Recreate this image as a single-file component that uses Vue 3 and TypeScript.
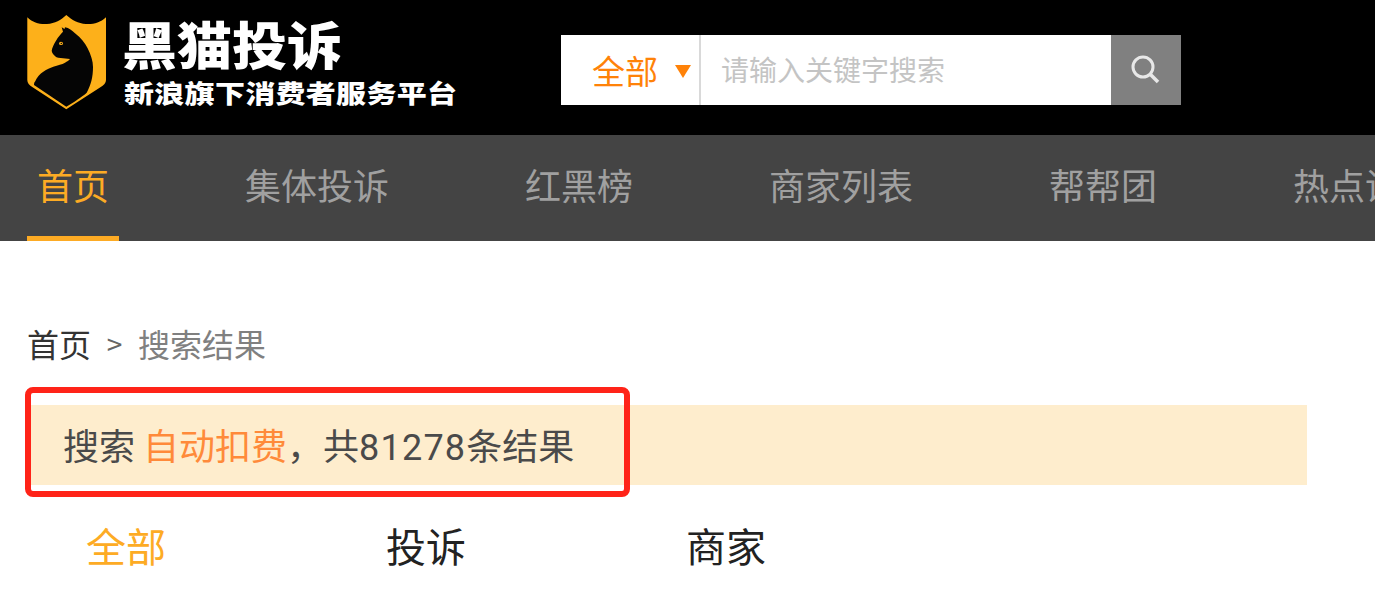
<template>
  <div class="page">
    <header class="top">
      <div class="logo">
        <svg class="shield" width="80" height="96" viewBox="0 0 80 96">
          <path d="M0.3 3.3 C6 9 13 10.5 20 10 C28 9.5 34 6 39.3 1 C45 6 51 9.5 59 10 C66 10.5 73 9 79 3.3 V66 C79 69 77 71 73 73.5 L39.3 95.3 L6 73.5 C2 71 0.3 69 0.3 66 Z" fill="#fdb01a" />
          <path d="M34.7 13.3 L37.5 15 L38 13.3 C42 14 45 16.5 48 19.3 C54 24 58 29 60.5 34 C64 41 66 47 66 53 C66 63 64 71 59.7 78.7 C55 83 47 88 39.3 92.7 L7 71 C7 69 7.5 68 8 67.7 C10 63 13 60 16.3 57.7 C20 55 23 54 26.3 52.7 C31 51 35 50.5 38 48.7 C40 47.5 42 46.5 43 45 L31.3 43.7 C30 43.5 29 43 28 42 C26 40.5 25 38.5 24.7 36.7 C25 34 27 30 29 26.7 C31 23 34 20 36 17.7 Z" fill="#050505" />
          <ellipse cx="34" cy="29.4" rx="2" ry="1.6" fill="#fdb01a" />
          <circle cx="34.3" cy="29.4" r="0.7" fill="#050505" />
        </svg>
        <div class="logo-text">
          <div class="logo-title">黑猫投诉</div>
          <div class="logo-sub">新浪旗下消费者服务平台</div>
        </div>
      </div>
      <div class="search">
        <div class="scope">全部<span class="caret"></span></div>
        <div class="input">请输入关键字搜索</div>
        <div class="search-btn">
          <svg width="32" height="32" viewBox="0 0 32 32" fill="none" stroke="#e8e8e8">
            <circle cx="13" cy="13" r="10" stroke-width="3" />
            <path d="M20 20 L28 28" stroke-width="3.5" />
          </svg>
        </div>
      </div>
    </header>

    <nav class="nav">
      <a v-for="(item, i) in navItems" :key="item" class="nav-item" :class="{ active: i === 0 }">{{ item }}</a>
    </nav>

    <main class="content">
      <div class="crumbs">
        <span class="crumb-home">首页</span>
        <span class="crumb-sep">&gt;</span>
        <span class="crumb-cur">搜索结果</span>
      </div>
      <div class="banner">
        搜索 <span class="keyword">自动扣费</span>，共<span class="num">81278</span>条结果
        <div class="mark"></div>
      </div>
      <div class="tabs">
        <div v-for="(tab, i) in tabs" :key="tab" class="tab" :class="{ active: i === 0 }">{{ tab }}</div>
      </div>
    </main>
  </div>
</template>

<script setup lang="ts">
const navItems = ['首页', '集体投诉', '红黑榜', '商家列表', '帮帮团', '热点调查']
const tabs = ['全部', '投诉', '商家']
</script>

<style>
html,
body {
  margin: 0;
  background: #fff;
  overflow: hidden;
}
</style>

<style scoped>
.page {
  width: 1375px;
  height: 597px;
  overflow: hidden;
  font-family: "Noto Sans CJK SC", "Noto Sans", sans-serif;
}

.top {
  height: 135px;
  background: #000;
  display: flex;
  align-items: flex-start;
}

.logo {
  display: flex;
  width: 561px;
  flex-shrink: 0;
  box-sizing: border-box;
  padding: 14px 0 0 27px;
}

.shield {
  flex-shrink: 0;
}

.logo-text {
  margin-left: 17px;
  color: #fff;
  font-weight: 900;
  white-space: nowrap;
}

.logo-title {
  font-size: 55px;
  line-height: 60px;
  margin-top: 1px;
  margin-left: -2px;
  transform: scaleY(0.92);
  transform-origin: left top;
}

.logo-sub {
  font-size: 30px;
  line-height: 34px;
  letter-spacing: 0.3px;
  margin-top: 2px;
  transform: scaleY(0.85);
  transform-origin: left top;
}

.search {
  display: flex;
  height: 70px;
  margin-top: 35px;
  background: #fff;
}

.scope {
  width: 107px;
  border-right: 2px solid #d9d9d9;
  display: flex;
  align-items: center;
  padding-left: 31px;
  font-size: 33px;
  color: #ff8208;
}

.caret {
  width: 0;
  height: 0;
  margin-left: 17px;
  margin-top: 2px;
  border-left: 8px solid transparent;
  border-right: 8px solid transparent;
  border-top: 13px solid #ff8208;
}

.input {
  width: 390px;
  padding: 0 0 2px 20px;
  display: flex;
  align-items: center;
  font-size: 28px;
  color: #c4c4c4;
}

.search-btn {
  width: 70px;
  background: #808080;
  display: flex;
  align-items: center;
  justify-content: center;
}

.nav {
  height: 106px;
  background: #444;
  display: flex;
  padding-left: 27px;
  white-space: nowrap;
}

.nav-item {
  flex-shrink: 0;
  padding: 0 10px;
  margin-right: 116px;
  line-height: 98px;
  font-size: 36px;
  color: #a0a0a0;
  box-sizing: border-box;
  height: 106px;
}

.nav-item.active {
  color: #fdab24;
  border-bottom: 5px solid #fdab24;
}

.content {
  padding: 0 68px 0 27px;
}

.crumbs {
  display: flex;
  align-items: center;
  height: 48px;
  margin-top: 78px;
  font-size: 32px;
}

.crumb-home {
  color: #333;
}

.crumb-sep {
  width: 47px;
  text-align: center;
  font-size: 28px;
  color: #666;
}

.crumb-cur {
  color: #808080;
}

.banner {
  position: relative;
  height: 80px;
  margin-top: 38px;
  padding-left: 36px;
  background: #feedcd;
  font-size: 36px;
  line-height: 78px;
  color: #4a4a4a;
}

.keyword {
  color: #ff8a3a;
}

.num {
  font-family: Roboto, sans-serif;
  letter-spacing: 1.2px;
}

.mark {
  position: absolute;
  left: -2px;
  top: -18px;
  box-sizing: border-box;
  width: 605px;
  height: 110px;
  border: 6px solid #ff2318;
  border-radius: 8px;
}

.tabs {
  display: flex;
  margin-top: 30px;
  padding-left: 59px;
}

.tab {
  width: 300px;
  font-size: 40px;
  line-height: 60px;
  color: #222;
}

.tab.active {
  color: #fdab24;
}
</style>
